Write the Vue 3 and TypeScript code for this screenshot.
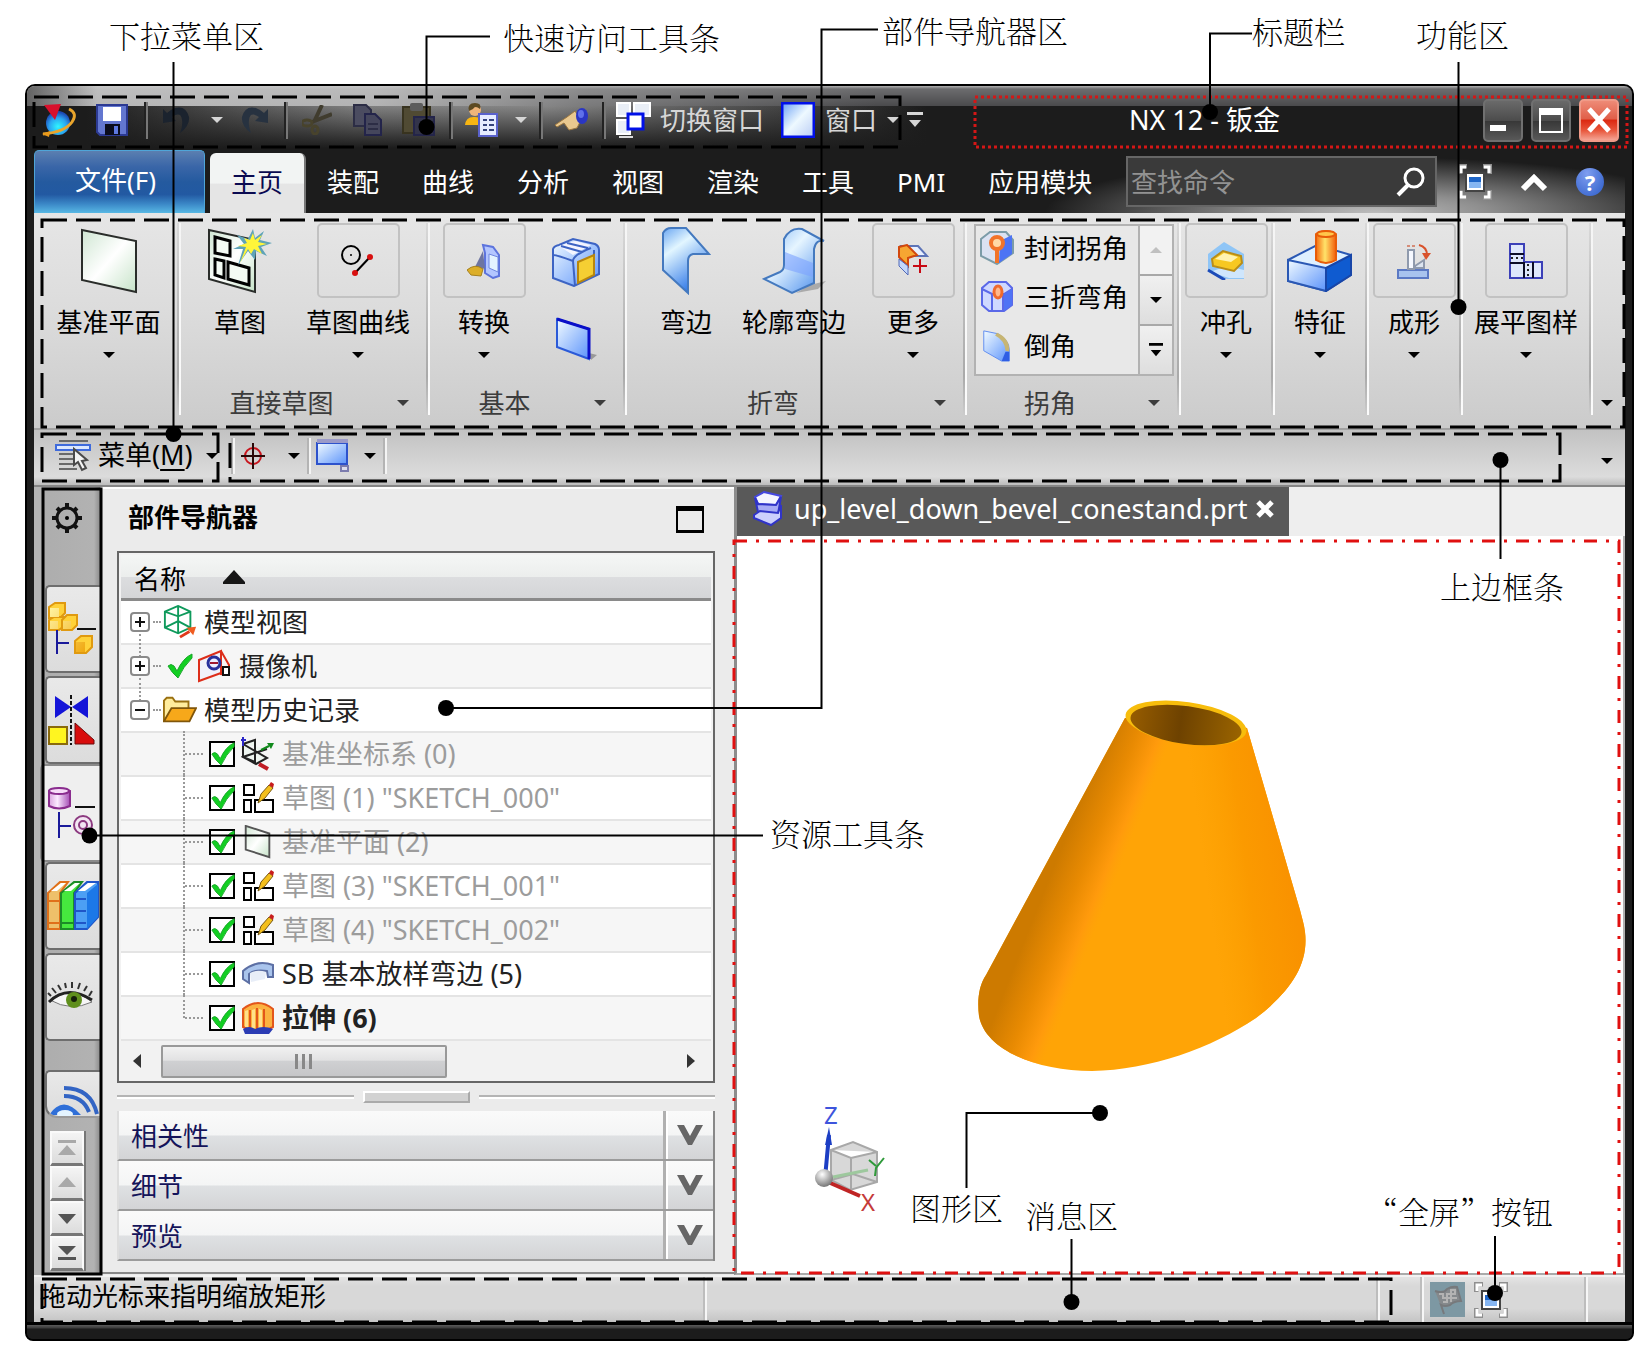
<script setup lang="ts">
import { ref } from 'vue'

interface Label { text: string; x: number; y: number }
interface Leader { points: string; cx?: number; cy?: number }
interface TreeItem {
  text: string
  icon: string
  level: 0 | 1
  open?: boolean
  tick?: boolean
  dim?: boolean
  bold?: boolean
  last?: boolean
}

const labels: Label[] = [
  { text: '下拉菜单区', x: 109, y: 48 },
  { text: '快速访问工具条', x: 503, y: 50 },
  { text: '部件导航器区', x: 882, y: 43 },
  { text: '标题栏', x: 1252, y: 44 },
  { text: '功能区', x: 1416, y: 47 },
  { text: '上边框条', x: 1440, y: 599 },
  { text: '资源工具条', x: 770, y: 846 },
  { text: '图形区', x: 910, y: 1220 },
  { text: '消息区', x: 1025, y: 1228 },
  { text: '“全屏”按钮', x: 1367, y: 1224 },
]

const leaders: Leader[] = [
  { points: '173.5,62 173.5,434', cx: 173.5, cy: 434 },
  { points: '490,36.5 426.5,36.5 426.5,127', cx: 426.5, cy: 127 },
  { points: '878,29.5 821.5,29.5 821.5,708 446,708', cx: 446, cy: 708 },
  { points: '1252,33.5 1210,33.5 1210,112', cx: 1210, cy: 112 },
  { points: '1458.5,62 1458.5,307', cx: 1458.5, cy: 307 },
  { points: '1500.5,559 1500.5,460', cx: 1500.5, cy: 460 },
  { points: '763,835.5 89.5,835.5', cx: 89.5, cy: 835.5 },
  { points: '966.5,1188 966.5,1113 1100,1113', cx: 1100, cy: 1113 },
  { points: '1071.5,1239 1071.5,1302', cx: 1071.5, cy: 1302 },
  { points: '1495,1236 1495,1293', cx: 1495, cy: 1293 },
]

const tabs = ['主页', '装配', '曲线', '分析', '视图', '渲染', '工具', 'PMI', '应用模块']
const activeTab = ref('主页')

const gallery = [
  { text: '封闭拐角', icon: 'corner-closed' },
  { text: '三折弯角', icon: 'corner-three' },
  { text: '倒角', icon: 'chamfer' },
]

const tree: TreeItem[] = [
  { text: '模型视图', icon: 'views', level: 0 },
  { text: '摄像机', icon: 'camera', level: 0, tick: true },
  { text: '模型历史记录', icon: 'folder', level: 0, open: true },
  { text: '基准坐标系 (0)', icon: 'csys', level: 1, dim: true },
  { text: '草图 (1) "SKETCH_000"', icon: 'sketch-s', level: 1, dim: true },
  { text: '基准平面 (2)', icon: 'plane-s', level: 1, dim: true },
  { text: '草图 (3) "SKETCH_001"', icon: 'sketch-s', level: 1, dim: true },
  { text: '草图 (4) "SKETCH_002"', icon: 'sketch-s', level: 1, dim: true },
  { text: 'SB 基本放样弯边 (5)', icon: 'loft', level: 1 },
  { text: '拉伸 (6)', icon: 'extrude', level: 1, bold: true, last: true },
]

const sections = ['相关性', '细节', '预览']
</script>

<template>
  <div class="page">
    <svg class="sprite" aria-hidden="true">
      <defs>
        <linearGradient id="g-plane" x1="0" y1="0" x2="1" y2="1"><stop offset="0" stop-color="#cfe6d2" /><stop offset=".5" stop-color="#fff" /><stop offset="1" stop-color="#c6e3c8" /></linearGradient>
        <linearGradient id="g-blue" x1="0" y1="0" x2="1" y2="1"><stop offset="0" stop-color="#7fb4f5" /><stop offset=".4" stop-color="#e6f5ff" /><stop offset="1" stop-color="#3f86ec" /></linearGradient>
        <linearGradient id="g-flange" x1="0" y1="0" x2=".5" y2="1"><stop offset="0" stop-color="#6aa6f2" /><stop offset=".35" stop-color="#e2f6ff" /><stop offset="1" stop-color="#2f78e8" /></linearGradient>
        <linearGradient id="g-blue2" x1="0" y1="0" x2="1" y2="1"><stop offset="0" stop-color="#f2fbff" /><stop offset="1" stop-color="#5b93fb" /></linearGradient>
        <linearGradient id="g-gold" x1="0" y1="0" x2="1" y2="1"><stop offset="0" stop-color="#fff3a0" /><stop offset="1" stop-color="#f0a810" /></linearGradient>
        <linearGradient id="g-cyl" x1="0" y1="0" x2="1" y2="0"><stop offset="0" stop-color="#f56a10" /><stop offset=".45" stop-color="#ffe36a" /><stop offset="1" stop-color="#f25c08" /></linearGradient>
        <linearGradient id="g-pink" x1="0" y1="0" x2="1" y2="0"><stop offset="0" stop-color="#d9a3df" /><stop offset=".4" stop-color="#fbeaff" /><stop offset="1" stop-color="#a54db5" /></linearGradient>
        <radialGradient id="g-globe" cx=".5" cy=".65" r=".6"><stop offset="0" stop-color="#2ff6ff" /><stop offset=".6" stop-color="#2aa4f0" /><stop offset="1" stop-color="#1c49b4" /></radialGradient>
        <linearGradient id="g-win" x1="0" y1="0" x2="1" y2="1"><stop offset="0" stop-color="#6aa0f5" /><stop offset=".5" stop-color="#eef9ff" /><stop offset="1" stop-color="#b9ccf5" /></linearGradient>
      </defs>

      <symbol id="i-logo" viewBox="0 0 36 34"><circle cx="17" cy="20" r="12" fill="url(#g-globe)" /><path d="M3 2 L20 1 L14 17 Z" fill="#d8102c" /><path d="M28 6 Q37 10 31 19 Q24 29 2 31" fill="none" stroke="#e9a52c" stroke-width="3" /><path d="M1 31 l8 -3 l-1 6 z" fill="#e99a1c" /></symbol>
      <symbol id="i-save" viewBox="0 0 32 32"><path d="M1 1 H31 V31 H4 L1 28 Z" fill="#6377d0" stroke="#2c3a93" stroke-width="2" /><rect x="7" y="3" width="18" height="14" fill="#fff" /><rect x="9" y="20" width="15" height="11" fill="#0a0c1c" /><rect x="18" y="22" width="4" height="8" fill="#5d78e0" /></symbol>
      <symbol id="i-undo" viewBox="0 0 28 28"><path d="M0 3 L0 17 L13 15 L9 11 Q18 5 19 14 Q20 20 17 27 Q27 20 26 11 Q23 -1 12 2 Q7 4 4 7 Z" fill="#1b232e" /></symbol>
      <symbol id="i-redo" viewBox="0 0 28 28"><path d="M28 3 L28 17 L15 15 L19 11 Q10 5 9 14 Q8 20 11 27 Q1 20 2 11 Q5 -1 16 2 Q21 4 24 7 Z" fill="#273240" /></symbol>
      <symbol id="i-cut" viewBox="0 0 30 30"><path d="M20 0 L12 17 M30 9 L10 17" stroke="#403c2e" stroke-width="4" /><ellipse cx="5" cy="18" rx="5" ry="3" fill="none" stroke="#48432c" stroke-width="3" /><ellipse cx="13" cy="25" rx="3" ry="4" fill="none" stroke="#48432c" stroke-width="3" /></symbol>
      <symbol id="i-copy" viewBox="0 0 30 32"><path d="M1 1 H13 L18 6 V22 H1 Z" fill="#4b4c60" stroke="#2c2d45" stroke-width="2" /><path d="M12 10 H22 L28 16 V31 H12 Z" fill="#45465c" stroke="#23244a" stroke-width="2" /><path d="M15 20 H25 M15 25 H25" stroke="#2c2d45" stroke-width="2" /></symbol>
      <symbol id="i-paste" viewBox="0 0 34 34"><rect x="1" y="4" width="27" height="26" fill="#504a33" stroke="#38331f" stroke-width="2" /><rect x="8" y="0" width="13" height="8" rx="2" fill="#5c5c5c" /><rect x="12" y="14" width="20" height="18" fill="#33344a" stroke="#24254a" stroke-width="2" /></symbol>
      <symbol id="i-user" viewBox="0 0 34 34"><circle cx="10" cy="7" r="6" fill="#efb57a" /><path d="M4 8 Q2 0 10 0 Q17 0 15 6 Q10 2 8 6 Z" fill="#5c4a22" /><path d="M0 22 Q1 13 10 14 Q19 14 18 22 Z" fill="#f7b512" /><rect x="14" y="11" width="18" height="22" fill="#e6ecff" stroke="#5a62cc" stroke-width="2" /><path d="M18 17 h4 M24 17 h5 M18 22 h4 M24 22 h5 M18 27 h4 M24 27 h5" stroke="#34427c" stroke-width="2" /></symbol>
      <symbol id="i-hand" viewBox="0 0 34 24"><path d="M0 17 L12 9 L20 3 L26 12 L22 20 L14 22 L9 15 L2 19 Z" fill="#e9c88f" stroke="#9a7640" /><ellipse cx="27" cy="8" rx="6" ry="8" fill="#2a36c4" /><ellipse cx="26" cy="6" rx="3" ry="4" fill="#5f70ea" /></symbol>
      <symbol id="i-switch" viewBox="0 0 36 36"><g fill="#e9eef6" stroke="#fff" stroke-width="2"><rect x="1" y="1" width="13" height="13" /><rect x="18" y="1" width="16" height="13" /><rect x="1" y="18" width="13" height="14" /></g><path d="M3 35 H17" stroke="#ddd" stroke-width="2" /><rect x="12" y="12" width="15" height="15" fill="#fff" stroke="#0010e8" stroke-width="3" /></symbol>
      <symbol id="i-window" viewBox="0 0 34 36"><rect x="1" y="1" width="32" height="34" fill="url(#g-win)" stroke="#0010e8" stroke-width="3" /></symbol>
      <symbol id="i-caret" viewBox="0 0 12 6"><path d="M0 0 H12 L6 6 Z" fill="currentColor" /></symbol>
      <symbol id="i-caret-up" viewBox="0 0 12 6"><path d="M0 6 H12 L6 0 Z" fill="currentColor" /></symbol>
      <symbol id="i-more" viewBox="0 0 16 16"><path d="M0 0 H16 V3 H0 Z M2 8 H14 L8 15 Z" fill="currentColor" /></symbol>
      <symbol id="i-full" viewBox="0 0 34 36"><path d="M2 10 V2 H9 M25 2 H32 V10 M32 26 V34 H25 M9 34 H2 V26" fill="none" stroke="#8f8f8f" stroke-width="5" /><path d="M3 9 V3 H8 M26 3 H31 V9 M31 27 V33 H26 M8 33 H3 V27" fill="none" stroke="#fff" stroke-width="3" /><rect x="8" y="9" width="18" height="18" fill="#fff" stroke="#444" stroke-width="2" /><rect x="11" y="13" width="12" height="6" fill="#1f66c8" /><rect x="11" y="18" width="12" height="6" fill="#86b6f2" /></symbol>
      <symbol id="i-search" viewBox="0 0 30 30"><circle cx="18" cy="11" r="9" fill="none" stroke="#fff" stroke-width="3" /><path d="M12 18 L2 28" stroke="#fff" stroke-width="4" /></symbol>
      <symbol id="i-up" viewBox="0 0 28 20"><path d="M3 17 L14 6 L25 17" fill="none" stroke="#fff" stroke-width="6" /></symbol>

      <symbol id="i-plane" viewBox="0 0 58 66"><path d="M2 2 L56 13 V64 L2 52 Z" fill="url(#g-plane)" stroke="#2a2d2a" stroke-width="2" /></symbol>
      <symbol id="i-sketch" viewBox="0 0 66 66"><path d="M2 2 L48 12 V64 L2 51 Z" fill="url(#g-plane)" stroke="#2a2d2a" stroke-width="2" /><path d="M8 9 L23 13 V28 L8 25 Z M8 31 L17 33 V50 L8 47 Z M21 34 L42 40 V57 L21 51 Z" fill="#f4fbf4" stroke="#000" stroke-width="3" /><path d="M46 1 L48 10 L57 3 L53 12 L65 15 L54 19 L60 28 L49 23 L48 32 L41 23 L31 37 L36 21 L26 21 L37 16 L30 7 L41 11 Z" fill="#5fa3b8" /><path d="M46 5 L48 12 L55 7 L51 14 L60 16 L51 18 L55 26 L47 21 L44 26 L41 21 L33 35 L39 19 L31 18 L40 15 L37 10 L43 12 Z" fill="#fff53a" /></symbol>
      <symbol id="i-curve" viewBox="0 0 34 34"><circle cx="10" cy="11" r="9" fill="none" stroke="#000" stroke-width="2" /><circle cx="10" cy="11" r="1" /><path d="M14 29 L29 13" stroke="#000" stroke-width="2" /><circle cx="14" cy="29" r="3" fill="#d80f0f" /><circle cx="29" cy="13" r="3" fill="#d80f0f" /></symbol>
      <symbol id="i-convert" viewBox="0 0 34 36"><path d="M16 2 L26 4 L32 12 V33 L26 35 L18 30 V10 Z" fill="#b3c6ff" stroke="#5d74dd" stroke-width="2" /><path d="M22 11 L31 14 V29 L22 25 Z" fill="#e3f3ff" stroke="#6f86e0" /><path d="M16 8 L18 26 L8 24 Z" fill="#6d75a2" /><path d="M0 27 Q8 20 16 26 L14 33 L4 32 Z" fill="#dcae28" stroke="#a5801e" /></symbol>
      <symbol id="i-box" viewBox="0 0 50 50"><path d="M2 12 Q3 9 8 8 L22 2 L44 7 Q48 9 48 13 V37 L23 49 L2 41 Z" fill="url(#g-blue2)" stroke="#3d64c4" stroke-width="2" /><path d="M8 9 L24 4 L40 8 L22 18 Z" fill="#f4f5ff" /><path d="M2 18 Q6 18 22 24 L24 49 M22 24 Q22 18 40 11 M10 9 L31 15 M16 6 L37 11 M43 13 V39" fill="none" stroke="#3d64c4" stroke-width="2" /><path d="M27 25 L43 18 V38 L27 46 Z" fill="#f5cf33" stroke="#b8860e" stroke-width="2" /></symbol>
      <symbol id="i-sheet" viewBox="0 0 42 44"><path d="M34 36 L42 38 L36 43 Z" fill="#999" /><path d="M2 2 L34 12 V42 L2 30 Z" fill="url(#g-blue2)" stroke="#2b5ad8" stroke-width="2" /><path d="M2 2 L34 12 V42" fill="none" stroke="#0a0fc8" stroke-width="3" /></symbol>
      <symbol id="i-flange" viewBox="0 0 50 68"><path d="M2 6 Q5 1 10 1 H25 L48 27 H32 Q27 28 27 34 V66 L2 43 Z" fill="url(#g-flange)" stroke="#4479bf" stroke-width="2" /></symbol>
      <symbol id="i-contour" viewBox="0 0 64 68"><path d="M48 58 L64 54 L56 62 L34 66 Z" fill="#aaa" /><path d="M22 12 Q28 0 40 2 L62 14 Q54 12 52 22 V56 L30 66 L2 52 L18 45 Q22 43 22 38 Z" fill="url(#g-blue)" stroke="#4479bf" stroke-width="2" /><path d="M23 25 L51 36 V50 L23 42 Z" fill="#7ba1ff" opacity=".6" /></symbol>
      <symbol id="i-more-bend" viewBox="0 0 32 34"><path d="M5 2 H21 L30 12 H18 Z" fill="#e8f0ff" stroke="#5d74b8" stroke-width="2" /><path d="M2 3 L10 1 L20 11 L11 14 V22 L2 13 Z" fill="#f6a632" stroke="#d2470c" stroke-width="2" /><path d="M2 15 L11 22 V31 L2 22 Z" fill="#c4d8fb" stroke="#5168b8" /><path d="M23 15 V29 M16 22 H30" stroke="#c80a14" stroke-width="2" /></symbol>
      <symbol id="i-corner-closed" viewBox="0 0 34 34"><path d="M1 8 L10 1 H26 L33 9 V22 L17 33 L1 25 Z" fill="#dbe2f2" stroke="#7c9ca8" stroke-width="2" /><path d="M20 10 L32 4 V23 L19 32 Z" fill="#4d74f4" /><circle cx="17" cy="12" r="6" fill="#ffd9a6" stroke="#f2742a" stroke-width="4" /><path d="M17 17 V32" stroke="#f2742a" stroke-width="4" /></symbol>
      <symbol id="i-corner-three" viewBox="0 0 34 34"><path d="M2 8 L9 2 H26 L32 8 V25 L24 31 H9 L2 25 Z" fill="#cfd8ff" stroke="#5a68e8" stroke-width="2" /><path d="M2 9 L12 14 H24 L32 9 M12 14 V31 M23 14 V31" fill="none" stroke="#5a68e8" stroke-width="2" /><path d="M24 14 L32 9 V25 L24 31 Z" fill="#4f73f5" /><ellipse cx="18" cy="12" rx="4" ry="6" fill="#ffb98c" stroke="#ef6a2e" stroke-width="3" /></symbol>
      <symbol id="i-chamfer" viewBox="0 0 34 36"><path d="M3 2 L18 5 Q30 12 30 22 V34 L22 34 L3 23 Z" fill="url(#g-blue2)" stroke="#5c8af0" /><path d="M17 4 Q31 10 30 24 L26 23 Q25 12 15 7 Z" fill="#c7b573" /><path d="M30 24 V34 L22 34 L26 24 Z" fill="#2f5ee4" /></symbol>
      <symbol id="i-punch" viewBox="0 0 38 38"><path d="M1 12 L17 0 L37 12 V37 L20 37 L1 30 Z" fill="#8fc5f6" /><path d="M3 30 L20 24 L37 28 V36 H22 Z" fill="#cfe6fc" /><path d="M1 28 L18 38" stroke="#1c4bb8" stroke-width="3" /><path d="M5 17 L16 9 L34 14 L35 21 L27 29 L6 24 Z" fill="#f7c821" stroke="#b98d18" stroke-width="2" /><path d="M8 17 L17 11 L31 15 L24 20 Z" fill="#fff3b0" /></symbol>
      <symbol id="i-feature" viewBox="0 0 66 62"><path d="M1 30 L30 15 L64 25 V45 L39 61 L1 51 Z" fill="#dff0ff" stroke="#2a58b4" stroke-width="2" /><path d="M1 30 L39 38 V61 L1 51 Z" fill="url(#g-blue2)" stroke="#2a58b4" stroke-width="2" /><path d="M39 38 L64 25 V45 L39 61 Z" fill="#0f5bd0" stroke="#1846a8" stroke-width="2" /><path d="M29 4 Q39 -2 49 4 V30 Q39 36 29 30 Z" fill="url(#g-cyl)" stroke="#e85c08" stroke-width="2" /><ellipse cx="39" cy="4" rx="9" ry="3" fill="#ffc64a" stroke="#e85c08" stroke-width="2" /></symbol>
      <symbol id="i-form" viewBox="0 0 34 36"><rect x="1" y="27" width="30" height="8" fill="#a8c3ee" stroke="#5b79c4" stroke-width="2" /><rect x="11" y="7" width="6" height="19" fill="#f5f8ff" stroke="#8f9aad" stroke-width="2" /><path d="M18 23 L27 17 V25 H18 Z" fill="#dde5f0" stroke="#8f9aad" stroke-width="2" /><path d="M10 3 h3 m2 0 h3" stroke="#d58c78" stroke-width="2" /><path d="M22 2 Q30 4 30 12" fill="none" stroke="#d9532c" stroke-width="2" /><path d="M25 10 H34 L29 17 Z" fill="#d9532c" /></symbol>
      <symbol id="i-flat" viewBox="0 0 34 36"><path d="M1 1 H15 V19 H33 V35 H1 Z" fill="#dfe7fb" stroke="#3c40b8" stroke-width="2" /><path d="M1 11 H15 M1 20 H15 V35 M24 19 V35" fill="none" stroke="#0c0c28" stroke-width="2" /><path d="M2 15 H14 M19 21 V34" stroke="#222" stroke-width="2" stroke-dasharray="2 3" /></symbol>

      <symbol id="i-menu" viewBox="0 0 36 32"><path d="M4 1 H33 M4 14 H20 M4 19 H20 M4 24 H20 M4 29 H22" stroke="#6a6a6a" stroke-width="2" /><rect x="1" y="5" width="34" height="5" fill="#dce8ff" stroke="#3f6bdc" stroke-width="2" /><path d="M19 9 V25 L23 22 L27 30 L31 28 L27 21 L32 20 Z" fill="#f4f4f4" stroke="#4a4a4a" stroke-width="2" /></symbol>
      <symbol id="i-target" viewBox="0 0 26 26"><circle cx="13" cy="13" r="8" fill="none" stroke="#c8141c" stroke-width="2" /><path d="M13 0 V26 M1 13 H25" stroke="#2a0808" stroke-width="2" /></symbol>
      <symbol id="i-view" viewBox="0 0 34 34"><rect x="1" y="4" width="30" height="21" fill="url(#g-blue2)" stroke="#2d52cc" stroke-width="2" /><rect x="1" y="0" width="31" height="4" fill="#9b9ac8" /><rect x="25" y="27" width="7" height="5" fill="#dde" stroke="#7c7cae" stroke-width="2" /></symbol>

      <symbol id="i-gear" viewBox="0 0 32 32"><circle cx="16" cy="16" r="10" fill="none" stroke="#111" stroke-width="3" /><path d="M16 1 V6 M16 26 V31 M1 16 H6 M26 16 H31 M6 6 L9 9 M23 23 L26 26 M26 6 L23 9 M6 26 L9 23" stroke="#111" stroke-width="4" /><circle cx="16" cy="16" r="2" /></symbol>
      <symbol id="i-assembly" viewBox="0 0 50 54">
        <g stroke="#e09a10" fill="#ffd23a" stroke-width="2"><path d="M2 5 L8 1 H18 V11 L13 16 H2 Z" /><path d="M2 18 L7 15 H17 V24 L12 28 H2 Z" /><path d="M15 18 L20 13 H30 V23 L25 28 H15 Z" /><path d="M28 39 L34 34 H45 V45 L39 51 H28 Z" /></g>
        <path d="M3 6 H12 V15 H3 Z M3 19 H11 V27 H3 Z M16 19 H24 V27 H16 Z M29 40 H38 V50 H29 Z" fill="url(#g-gold)" />
        <path d="M30 27 H49" stroke="#111" stroke-width="2" /><path d="M10 28 V52 M10 41 H22" stroke="#1a1a9a" stroke-width="2" />
      </symbol>
      <symbol id="i-constraint" viewBox="0 0 48 50"><path d="M8 1 L24 12 L8 23 Z M41 1 L25 12 L41 23 Z" fill="#1414d8" /><path d="M24 0 V50" stroke="#111" stroke-width="2" stroke-dasharray="4 2" /><rect x="2" y="32" width="18" height="17" fill="#fff520" stroke="#8a6a0c" stroke-width="2" /><path d="M28 28 L47 45 V49 H28 Z" fill="#d80c0c" stroke="#6c0a0a" /></symbol>
      <symbol id="i-part" viewBox="0 0 48 52"><path d="M1 4 Q11 -1 22 4 V19 Q11 24 1 19 Z" fill="url(#g-pink)" stroke="#8a2c8e" stroke-width="2" /><ellipse cx="11" cy="4" rx="10" ry="3" fill="#f6dcf8" stroke="#8a2c8e" stroke-width="2" /><path d="M27 20 H47" stroke="#111" stroke-width="2" /><path d="M11 25 V51 M11 39 H23" stroke="#1a1a9a" stroke-width="2" /><circle cx="35" cy="38" r="9" fill="#f3e6f3" stroke="#8c3a80" stroke-width="2" /><circle cx="35" cy="38" r="4" fill="none" stroke="#8c3a80" stroke-width="2" /></symbol>
      <symbol id="i-books" viewBox="0 0 52 50"><path d="M1 12 L13 1 L21 1 L13 12 V48 H1 Z" fill="#eec06a" stroke="#e0701a" stroke-width="2" /><path d="M14 12 L27 1 H35 L27 12 V48 H14 Z" fill="#46e83e" stroke="#1c8c28" stroke-width="2" /><path d="M28 12 L40 1 H51 V36 L40 48 H28 Z" fill="#4c9ff4" stroke="#1f55c8" stroke-width="2" /><path d="M4 10 L14 2 H19 L10 10 Z M17 10 L28 2 H33 L24 10 Z M31 10 L41 2 H49 L38 10 Z" fill="#fff" /><path d="M40 12 L51 3 V36 L40 48 Z" fill="#1c78e8" /><path d="M1 20 H13 M1 42 H13" stroke="#e0701a" stroke-width="2" /><path d="M28 18 H39 M28 30 H39 M28 42 H39" stroke="#1f55c8" stroke-width="2" /><path d="M14 42 H27" stroke="#1c8c28" stroke-width="2" /></symbol>
      <symbol id="i-eye" viewBox="0 0 48 30"><path d="M3 18 Q22 2 45 20 Q24 30 3 18 Z" fill="#f6f6f6" stroke="#777" /><path d="M2 20 Q20 2 45 18" fill="none" stroke="#222" stroke-width="3" /><path d="M4 14 L1 11 M9 11 L5 6 M14 8 L11 3 M19 6 L18 1 M25 6 L25 0 M31 7 L33 1 M37 9 L40 4 M42 14 L45 9" stroke="#333" stroke-width="2" /><circle cx="27" cy="18" r="8" fill="#5f8f1c" /><circle cx="27" cy="17" r="3" fill="#16200a" /></symbol>
      <symbol id="i-web" viewBox="0 0 52 30"><path d="M2 29 Q16 8 34 29 Z" fill="#2f6fd8" /><ellipse cx="18" cy="28" rx="8" ry="4" fill="#e4f4ff" /><path d="M17 2 Q44 2 50 28 M17 10 Q36 10 42 26" fill="none" stroke="#3264c4" stroke-width="4" /></symbol>

      <symbol id="i-views" viewBox="0 0 36 36"><path d="M2 7 L16 1 L29 7 V24 L16 30 L2 24 Z M2 7 L16 12 L29 7 M16 1 V30 M2 24 L16 17 L29 24" fill="none" stroke="#0f9a5c" stroke-width="2" /><path d="M18 34 L28 28" stroke="#e03a1c" stroke-width="3" /><path d="M25 24 L35 23 L32 32 Z" fill="#f05c20" /></symbol>
      <symbol id="i-tick" viewBox="0 0 28 26"><path d="M2 13 Q5 10 8 13 L11 18 Q17 5 26 1 L26 5 Q17 14 12 25 Q6 20 2 13 Z" fill="#12cf22" stroke="#1aa52a" /></symbol>
      <symbol id="i-camera" viewBox="0 0 34 34"><path d="M1 11 L23 2 V24 L1 32 Z" fill="#f1f1fa" stroke="#dd2e1a" stroke-width="2" /><path d="M23 2 L31 16 V26 L22 25" fill="none" stroke="#dd2e1a" stroke-width="2" /><circle cx="16" cy="14" r="6" fill="#eef" stroke="#28309c" stroke-width="3" /><path d="M12 14 H20" stroke="#a01830" stroke-width="2" /><rect x="25" y="18" width="6" height="8" fill="#fff" stroke="#111" stroke-width="2" /></symbol>
      <symbol id="i-folder" viewBox="0 0 36 28"><path d="M1 26 V4 L4 1 H10 L13 5 H27 V14" fill="#ffec9c" stroke="#9a7010" stroke-width="2" /><path d="M1 26 L9 12 H35 L28 26 Z" fill="#f7a81a" stroke="#80560a" stroke-width="2" /></symbol>
      <symbol id="i-csys" viewBox="0 0 34 34"><path d="M2 7 L14 3 V25 L2 20 Z M2 7 L26 21 L15 27 L2 20 L26 12" fill="#eaf5ec" fill-opacity=".6" stroke="#222" stroke-width="2" /><path d="M2 9 V0 M0 3 H5" stroke="#2c28c8" stroke-width="2" /><path d="M20 13 L28 9" stroke="#118a1c" stroke-width="2" /><path d="M26 6 H33 L30 12 Z" fill="#118a1c" /><path d="M18 27 L27 32" stroke="#c01c24" stroke-width="4" /></symbol>
      <symbol id="i-sketch-s" viewBox="0 0 34 34"><path d="M3 4 H13 V14 H3 Z M3 19 H10 V31 H3 Z M14 19 H32 V31 H14 Z" fill="#fff" stroke="#000" stroke-width="2" /><path d="M17 22 L20 13 L28 4 L32 7 L24 17 Z" fill="#f4bf1c" stroke="#7a5a14" /><path d="M28 4 L32 7 L33 3 L30 1 Z" fill="#c81c1c" /></symbol>
      <symbol id="i-plane-s" viewBox="0 0 34 36"><path d="M4 1 L29 9 V34 L4 26 Z" fill="url(#g-plane)" stroke="#555" stroke-width="2" /></symbol>
      <symbol id="i-loft" viewBox="0 0 34 34"><path d="M2 14 Q16 2 32 8 V20 H27 L26 14 Q14 12 8 17 V26 L2 22 Z" fill="#a9c4ec" stroke="#5c6fa4" stroke-width="2" /><path d="M9 16 Q16 12 25 15 L24 22 L10 25 Z" fill="#e8eef8" /></symbol>
      <symbol id="i-extrude" viewBox="0 0 34 34"><path d="M2 8 Q17 -4 32 8 V26 Q17 34 2 26 Z" fill="#fbb240" stroke="#e3561a" stroke-width="2" /><path d="M9 9 V29 M16 7 V30 M23 8 V29" stroke="#e3561a" stroke-width="2" /><path d="M11 9 V27 H14 V8 Z M4 10 V26 H7 V9 Z M18 8 V28 H21 V9 Z" fill="#ffe08a" /><path d="M2 28 Q8 24 14 28 Q22 24 32 28 L28 33 H4 Z" fill="#2b3cb4" /></symbol>
      <symbol id="i-doc" viewBox="0 0 32 36"><path d="M3 6 L12 1 L29 5 L24 14 L6 13 Z" fill="#f5f6ff" stroke="#4548e0" stroke-width="2" /><path d="M3 7 L6 21 L26 23 L29 6 L24 14 L6 13 Z" fill="#a6aaf5" stroke="#3034c8" stroke-width="2" /><path d="M2 24 L8 20 L26 22 L29 14 V27 L19 34 L2 27 Z" fill="#ccd0fc" stroke="#3034c8" stroke-width="2" /></symbol>
      <symbol id="i-vee" viewBox="0 0 28 22"><path d="M1 1 H8 L14 12 L20 1 H27 L16 21 H12 Z" fill="#666" /></symbol>
    </svg>

    <main class="window">
      <header class="titlebar">
        <nav class="quick">
          <button class="q w50" aria-label="NX"><svg width="36" height="34"><use href="#i-logo" /></svg></button>
          <button class="q w56" aria-label="保存"><svg width="32" height="32"><use href="#i-save" /></svg></button>
          <i class="qsep w11"></i>
          <button class="q w52" aria-label="撤销"><svg width="28" height="28"><use href="#i-undo" /></svg></button>
          <button class="q w28" aria-label="撤销列表"><svg width="12" height="6"><use href="#i-caret" /></svg></button>
          <button class="q w46" aria-label="重做"><svg width="28" height="28"><use href="#i-redo" /></svg></button>
          <i class="qsep w17"></i>
          <button class="q w46" aria-label="剪切"><svg width="30" height="30"><use href="#i-cut" /></svg></button>
          <button class="q w56" aria-label="复制"><svg width="30" height="32"><use href="#i-copy" /></svg></button>
          <button class="q w46" aria-label="粘贴"><svg width="34" height="34"><use href="#i-paste" /></svg></button>
          <i class="qsep w17"></i>
          <button class="q w46" aria-label="角色"><svg width="34" height="34"><use href="#i-user" /></svg></button>
          <button class="q w32" aria-label="角色列表"><svg width="12" height="6"><use href="#i-caret" /></svg></button>
          <i class="qsep w7"></i>
          <button class="q w56" aria-label="触控"><svg width="34" height="24"><use href="#i-hand" /></svg></button>
          <i class="qsep w7"></i>
          <button class="q switch"><svg width="36" height="36"><use href="#i-switch" /></svg>切换窗口</button>
          <button class="q wins"><svg width="34" height="36"><use href="#i-window" /></svg>窗口<svg width="12" height="6"><use href="#i-caret" /></svg></button>
          <button class="q w32" aria-label="工具条选项"><svg width="16" height="16"><use href="#i-more" /></svg></button>
        </nav>
        <h1 class="apptitle">NX 12 - 钣金</h1>
        <div class="winbtns">
          <button class="wb" aria-label="最小化"><svg width="28" height="30" viewBox="0 0 28 30"><rect x="1" y="20" width="16" height="6" fill="#fff" /></svg></button>
          <button class="wb" aria-label="最大化"><svg width="28" height="30" viewBox="0 0 28 30"><path d="M2 3 H26 V28 H2 Z M4 10 V26 H24 V10 Z" fill="#fff" fill-rule="evenodd" /></svg></button>
          <button class="wb close" aria-label="关闭"><svg width="28" height="30" viewBox="0 0 28 30"><path d="M4 4 L24 26 M24 4 L4 26" stroke="#fff" stroke-width="5" /></svg></button>
        </div>
      </header>

      <nav class="tabs">
        <button class="file">文件(F)</button>
        <button v-for="t in tabs" :key="t" class="tab" :class="{ on: t === activeTab }" @click="activeTab = t">{{ t }}</button>
        <div class="tabs-right">
          <label class="search">
            <input type="text" placeholder="查找命令" aria-label="查找命令" />
            <svg width="30" height="30"><use href="#i-search" /></svg>
          </label>
          <button class="tr" aria-label="全屏"><svg width="34" height="36"><use href="#i-full" /></svg></button>
          <button class="tr" aria-label="最小化功能区"><svg width="28" height="20"><use href="#i-up" /></svg></button>
          <button class="tr" aria-label="帮助"><span class="help">?</span></button>
        </div>
      </nav>

      <section class="ribbon">
        <div class="group g1">
          <div class="tools">
            <button class="tool"><span class="slot"><svg width="58" height="66"><use href="#i-plane" /></svg></span><span>基准平面</span><svg class="dd" width="12" height="6"><use href="#i-caret" /></svg></button>
          </div>
        </div>
        <div class="group g2">
          <div class="tools">
            <button class="tool t120"><span class="slot"><svg width="66" height="66"><use href="#i-sketch" /></svg></span><span>草图</span></button>
            <button class="tool t120"><span class="slot framed"><svg width="34" height="34"><use href="#i-curve" /></svg></span><span>草图曲线</span><svg class="dd" width="12" height="6"><use href="#i-caret" /></svg></button>
          </div>
          <div class="foot"><span>直接草图</span><svg width="12" height="6"><use href="#i-caret" /></svg></div>
        </div>
        <div class="group g3">
          <div class="tools">
            <button class="tool t108"><span class="slot framed"><svg width="34" height="36"><use href="#i-convert" /></svg></span><span>转换</span><svg class="dd" width="12" height="6"><use href="#i-caret" /></svg></button>
            <div class="stack">
              <button aria-label="实体特征"><svg width="50" height="50"><use href="#i-box" /></svg></button>
              <button aria-label="突出块"><svg width="42" height="44"><use href="#i-sheet" /></svg></button>
            </div>
          </div>
          <div class="foot"><span>基本</span><svg width="12" height="6"><use href="#i-caret" /></svg></div>
        </div>
        <div class="group g4">
          <div class="tools">
            <button class="tool t108"><span class="slot"><svg width="50" height="68"><use href="#i-flange" /></svg></span><span>弯边</span></button>
            <button class="tool t108"><span class="slot"><svg width="64" height="68"><use href="#i-contour" /></svg></span><span>轮廓弯边</span></button>
            <button class="tool t108 end"><span class="slot framed"><svg width="32" height="34"><use href="#i-more-bend" /></svg></span><span>更多</span><svg class="dd" width="12" height="6"><use href="#i-caret" /></svg></button>
          </div>
          <div class="foot"><span>折弯</span><svg width="12" height="6"><use href="#i-caret" /></svg></div>
        </div>
        <div class="group g5">
          <div class="gallery">
            <div class="glist">
              <button v-for="g in gallery" :key="g.text"><svg width="34" height="34"><use :href="'#i-' + g.icon" /></svg>{{ g.text }}</button>
            </div>
            <div class="gscroll">
              <button class="off" aria-label="上一行"><svg width="12" height="6"><use href="#i-caret-up" /></svg></button>
              <button aria-label="下一行"><svg width="12" height="6"><use href="#i-caret" /></svg></button>
              <button aria-label="展开"><svg width="14" height="14"><use href="#i-more" /></svg></button>
            </div>
          </div>
          <div class="foot"><span>拐角</span><svg width="12" height="6"><use href="#i-caret" /></svg></div>
        </div>
        <div class="group g6"><div class="tools"><button class="tool"><span class="slot framed"><svg width="38" height="38"><use href="#i-punch" /></svg></span><span>冲孔</span><svg class="dd" width="12" height="6"><use href="#i-caret" /></svg></button></div></div>
        <div class="group g6"><div class="tools"><button class="tool"><span class="slot"><svg width="66" height="62"><use href="#i-feature" /></svg></span><span>特征</span><svg class="dd" width="12" height="6"><use href="#i-caret" /></svg></button></div></div>
        <div class="group g6"><div class="tools"><button class="tool"><span class="slot framed"><svg width="34" height="36"><use href="#i-form" /></svg></span><span>成形</span><svg class="dd" width="12" height="6"><use href="#i-caret" /></svg></button></div></div>
        <div class="group g9"><div class="tools"><button class="tool"><span class="slot framed"><svg width="34" height="36"><use href="#i-flat" /></svg></span><span>展平图样</span><svg class="dd" width="12" height="6"><use href="#i-caret" /></svg></button></div></div>
        <button class="ribbon-end" aria-label="功能区选项"><svg width="12" height="6"><use href="#i-caret" /></svg></button>
      </section>

      <section class="borderbar">
        <button class="menu"><svg width="36" height="32"><use href="#i-menu" /></svg><span>菜单(<u>M</u>)</span><svg width="12" height="6"><use href="#i-caret" /></svg></button>
        <i class="bsep"></i>
        <button class="bb" aria-label="选择过滤"><svg width="26" height="26"><use href="#i-target" /></svg><svg width="12" height="6"><use href="#i-caret" /></svg></button>
        <i class="bsep"></i>
        <button class="bb" aria-label="视图"><svg width="34" height="34"><use href="#i-view" /></svg><svg width="12" height="6"><use href="#i-caret" /></svg></button>
        <i class="bsep"></i>
        <button class="bend" aria-label="上边框条选项"><svg width="12" height="6"><use href="#i-caret" /></svg></button>
      </section>

      <section class="work">
        <aside class="resbar">
          <button class="gear" aria-label="资源条选项"><svg width="32" height="32"><use href="#i-gear" /></svg></button>
          <button class="res" aria-label="装配导航器"><svg width="50" height="54"><use href="#i-assembly" /></svg></button>
          <button class="res" aria-label="约束导航器"><svg width="48" height="50"><use href="#i-constraint" /></svg></button>
          <button class="res sel" aria-label="部件导航器"><svg width="48" height="52"><use href="#i-part" /></svg></button>
          <button class="res" aria-label="重用库"><svg width="52" height="50"><use href="#i-books" /></svg></button>
          <button class="res" aria-label="视图管理器"><svg width="48" height="30"><use href="#i-eye" /></svg></button>
          <button class="res cut" aria-label="浏览器"><svg width="52" height="30"><use href="#i-web" /></svg></button>
          <div class="rscroll">
            <button aria-label="顶部"><svg width="20" height="20" viewBox="0 0 20 20"><path d="M1 2 H19 V5 H1 Z M10 7 L19 17 H1 Z" fill="#a9a9a9" /></svg></button>
            <button aria-label="向上"><svg width="20" height="20" viewBox="0 0 20 20"><path d="M10 4 L19 14 H1 Z" fill="#a9a9a9" /></svg></button>
            <button aria-label="向下"><svg width="20" height="20" viewBox="0 0 20 20"><path d="M10 16 L19 6 H1 Z" fill="#555" /></svg></button>
            <button aria-label="底部"><svg width="20" height="20" viewBox="0 0 20 20"><path d="M10 12 L19 3 H1 Z M1 14 H19 V17 H1 Z" fill="#555" /></svg></button>
          </div>
        </aside>

        <section class="navigator">
          <div class="navhead">
            <h2>部件导航器</h2>
            <button aria-label="最大化面板"><svg width="28" height="27" viewBox="0 0 28 27"><path d="M0 0 H28 V27 H0 Z M2 5 V24 H26 V5 Z" fill="#000" fill-rule="evenodd" /></svg></button>
          </div>
          <div class="treebox">
            <button class="colhead"><span>名称</span><svg width="22" height="14" viewBox="0 0 22 14"><path d="M11 0 L22 12 V14 H0 V12 Z" fill="#161616" /></svg></button>
            <ul class="tree">
              <li v-for="(n, i) in tree" :key="i" :class="['lv' + n.level, { dim: n.dim, bold: n.bold, last: n.last, open: n.open }]">
                <template v-if="n.level === 0">
                  <button class="exp" :aria-label="n.open ? '折叠' : '展开'"><svg width="20" height="20" viewBox="0 0 20 20"><path :d="n.open ? 'M5 10 H15' : 'M5 10 H15 M10 5 V15'" stroke="#111" stroke-width="2" /></svg></button>
                  <i class="dots"></i>
                  <svg v-if="n.tick" class="mark" width="28" height="26"><use href="#i-tick" /></svg>
                </template>
                <label v-else class="check"><input type="checkbox" checked :aria-label="n.text" /><svg width="26" height="26"><use href="#i-tick" /></svg></label>
                <svg class="nicon" width="34" height="34"><use :href="'#i-' + n.icon" /></svg>
                <span>{{ n.text }}</span>
              </li>
            </ul>
            <div class="hscroll">
              <button class="arr" aria-label="向左滚动"><svg width="8" height="14" viewBox="0 0 8 14"><path d="M8 0 V14 L0 7 Z" fill="#333" /></svg></button>
              <div class="track"><div class="thumb"><i></i><i></i><i></i></div></div>
              <button class="arr" aria-label="向右滚动"><svg width="8" height="14" viewBox="0 0 8 14"><path d="M0 0 V14 L8 7 Z" fill="#333" /></svg></button>
            </div>
          </div>
          <div class="splitter"><i class="line"></i><i class="grip"></i><i class="line"></i></div>
          <div class="panels">
            <button v-for="s in sections" :key="s"><span>{{ s }}</span><b><svg width="28" height="22"><use href="#i-vee" /></svg></b></button>
          </div>
        </section>

        <section class="graphics">
          <div class="doctabs">
            <div class="doc"><svg width="32" height="36"><use href="#i-doc" /></svg><span>up_level_down_bevel_conestand.prt</span><button aria-label="关闭文件"><svg width="18" height="18" viewBox="0 0 18 18"><path d="M2 2 L16 16 M16 2 L2 16" stroke="#fff" stroke-width="5" /></svg></button></div>
          </div>
          <div class="canvas">
            <svg width="888" height="738" viewBox="737 536 888 738">
              <defs>
                <linearGradient id="shade-l" gradientUnits="userSpaceOnUse" x1="1054" y1="866" x2="1112" y2="889"><stop offset="0" stop-color="#cd7a00" /><stop offset=".45" stop-color="#e88a02" /><stop offset=".8" stop-color="#ff9a0c" /><stop offset="1" stop-color="#ff9f0c" stop-opacity="0" /></linearGradient>
                <linearGradient id="shade-r" gradientUnits="userSpaceOnUse" x1="1205" y1="880" x2="1290" y2="868"><stop offset="0" stop-color="#fba000" stop-opacity="0" /><stop offset=".5" stop-color="#fb9a00" /><stop offset="1" stop-color="#f99200" /></linearGradient>
                <linearGradient id="hole" x1="0" y1="0" x2="1" y2="0"><stop offset="0" stop-color="#965c00" /><stop offset=".45" stop-color="#6e4200" /><stop offset="1" stop-color="#9a6400" /></linearGradient>
                <radialGradient id="ball" cx=".4" cy=".3" r=".7"><stop offset="0" stop-color="#fff" /><stop offset="1" stop-color="#777" /></radialGradient>
              </defs>
              <path v-for="f in ['#ffa406', 'url(#shade-l)', 'url(#shade-r)']" :key="f" d="M1125 718 L986 975 C979 985 977 1000 979 1016 C985 1050 1037 1071 1092 1071 C1150 1070 1212 1048 1256 1018 C1290 992 1309 965 1305 932 C1304 924 1302 918 1300 910 L1247 728 L1186 716 Z" :fill="f" />
              <ellipse cx="1186" cy="723" rx="61" ry="21" transform="rotate(8 1186 723)" fill="#f7bd0c" />
              <ellipse cx="1186" cy="725" rx="56" ry="19" transform="rotate(8 1186 725)" fill="url(#hole)" />
              <path d="M831 1150 L853 1142 L877 1152 V1182 L850 1190 L831 1180 Z M831 1150 L851 1158 L877 1152 M851 1158 V1190 M831 1180 L853 1174 L877 1182" fill="#d8d8d8" fill-rule="nonzero" stroke="#a8a8a8" stroke-width="2" />
              <path d="M833 1177 L868 1170" stroke="#9dc89d" stroke-width="3" />
              <path d="M825 1178 L829 1135" stroke="#1c3ec4" stroke-width="4" />
              <path d="M825 1145 L829 1127 L832 1145 Z" fill="#1c3ec4" />
              <path d="M828 1182 L860 1196" stroke="#c02424" stroke-width="4" />
              <circle cx="824" cy="1178" r="9" fill="url(#ball)" />
              <text x="824" y="1124" class="axis" fill="#3e54dc">Z</text>
              <text x="861" y="1211" class="axis" fill="#c43a3a">X</text>
              <path d="M869 1160 L876 1166 M884 1158 L876 1168 L875 1176" fill="none" stroke="#2f9a3a" stroke-width="2" />
            </svg>
          </div>
        </section>
      </section>

      <footer class="status">
        <p>拖动光标来指明缩放矩形</p>
        <div class="msg"></div>
        <div class="pad"></div>
        <div class="sicons">
          <button class="flag" aria-label="完成草图"><svg width="34" height="34" viewBox="0 0 34 34"><path d="M5 8 Q14 11 17 6 Q22 3 27 4 L31 18 Q24 18 20 22 Q15 24 11 22 L14 31" fill="#85898c" stroke="#77797c" stroke-width="2" /><path d="M9 11 h4 v4 h4 v-4 h4 v-4 h4 v4 h-4 v4 h6 M13 19 h4 v-4 h4 v4" fill="none" stroke="#b3b3b3" stroke-width="2" /></svg></button>
          <button aria-label="全屏"><svg width="34" height="36"><use href="#i-full" /></svg></button>
        </div>
        <div class="rest"></div>
      </footer>
      <div class="sill"></div>
    </main>

    <svg class="notes" width="1645" height="1347" viewBox="0 0 1645 1347">
      <g fill="none" stroke="#000" stroke-width="3" stroke-dasharray="25 9">
        <rect x="34" y="97" width="866" height="50" />
        <rect x="42" y="220" width="1582" height="207" />
        <rect x="42" y="434" width="176" height="47" />
        <rect x="230" y="434" width="1330" height="47" />
        <rect x="42" y="1279" width="1349" height="43" />
      </g>
      <rect x="43" y="489" width="58" height="785" fill="none" stroke="#000" stroke-width="3" />
      <rect x="975" y="97" width="652" height="50" fill="none" stroke="#d41616" stroke-width="3" stroke-dasharray="3 3" />
      <rect x="734" y="541" width="885" height="732" fill="none" stroke="#e01010" stroke-width="3" stroke-dasharray="13 9 3 9" />
      <g v-for="l in leaders" :key="l.points">
        <polyline :points="l.points" fill="none" stroke="#000" stroke-width="2" />
        <circle :cx="l.cx" :cy="l.cy" r="8" />
      </g>
      <text v-for="l in labels" :key="l.text" :x="l.x" :y="l.y" class="note">{{ l.text }}</text>
    </svg>
  </div>
</template>

<style>
body { margin: 0; background: #fff; }
</style>

<style scoped>
* { box-sizing: border-box; }
.page { position: relative; padding: 84px 11px 6px 25px; font: 26px/32px "Noto Sans", "Noto Sans CJK SC", sans-serif; color: #000; background: #fff; overflow: hidden; }
.sprite { position: absolute; width: 0; height: 0; }
svg { display: block; flex: none; }
button { font: inherit; color: inherit; border: 0; background: none; padding: 0; margin: 0; white-space: nowrap; }
h1, h2, p, ul { margin: 0; padding: 0; font: inherit; }
i { font-style: normal; }
.notes { position: absolute; left: 0; top: 0; pointer-events: none; }
.note { font: 200 31px "Noto Serif CJK SC", "Noto Sans CJK SC", serif; }

.window { border: 2px solid #000; border-radius: 10px 10px 8px 8px; background: #1c1c1c; padding: 0 7px; overflow: hidden; }
.titlebar { display: flex; align-items: center; height: 64px; margin: 0 -7px; padding: 4px 7px 0; color: #fff;
  background:
    linear-gradient(90deg, rgba(60,60,60,.7) 0, rgba(200,200,200,0) 70px) 0 0 / 100% 20px no-repeat,
    linear-gradient(90deg, rgba(205,205,205,.85) 0, rgba(205,205,205,.8) 350px, rgba(170,170,170,.5) 560px, rgba(90,90,90,0) 850px) 0 0 / 100% 20px no-repeat,
    linear-gradient(#b0b0b0 0, #6c6c6e 3px, #4a4a4c 20px) 0 0 / 100% 20px no-repeat,
    linear-gradient(rgba(28,28,28,0) 20px, #1c1c1c 62px),
    linear-gradient(90deg, #1c1c1c 60px, #808080 330px, #868686 520px, #1c1c1c 900px); }
.quick { display: flex; align-items: center; color: #d6d6d6; }
.q { display: flex; align-items: center; justify-content: center; height: 40px; }
.qsep { display: flex; justify-content: center; }
.qsep::before { content: ""; width: 4px; height: 37px; background: linear-gradient(90deg, #222 50%, #777 50%); }
.w7 { width: 7px; } .w11 { width: 11px; } .w17 { width: 17px; } .w28 { width: 28px; } .w32 { width: 32px; }
.w46 { width: 46px; } .w50 { width: 50px; } .w52 { width: 52px; } .w56 { width: 56px; }
.switch { gap: 8px; padding-left: 9px; }
.wins { gap: 10px; padding-left: 17px; }
.apptitle { margin-left: auto; width: 354px; white-space: nowrap; font-size: 27px; }
.winbtns { display: flex; gap: 8px; padding-right: 6px; }
.wb { width: 40px; height: 43px; display: flex; align-items: center; justify-content: center; border: 2px solid #707070; border-radius: 5px; background: linear-gradient(#6a6a6a, #4c4c4c 50%, #383838 52%, #585858); }
.wb.close { border-color: #f09a88; background: linear-gradient(#ee8a76, #e0604a 45%, #dc2a12 50%, #e8553a 75%, #f4a494); }

.tabs { display: flex; height: 63px; color: #fff; background: radial-gradient(ellipse 330px 56px at calc(100% - 250px) 100%, #bdbdbd 0, #8d8d8d 35%, rgba(28,28,28,0) 100%), #1c1c1c; }
.file { width: 171px; border-radius: 5px 5px 0 0; margin-right: 5px; padding: 0 8px 4px 0; border: 1px solid #4fa5d8; border-bottom: 0; background: linear-gradient(#5b7fb0, #3a66a8 25%, #245a9f 50%, #2259a2 70%, #3a86c6 85%, #58b8e4); }
.tab { padding: 0 21px; margin-right: 1px; }
.tab.on { margin: 3px 0 0; border-radius: 6px 6px 0 0; background: linear-gradient(#f2f4f3 50%, #e5e5e5 52%); color: #0a0a50; border-right: 2px solid #777; padding-bottom: 3px; }
.tabs-right { display: flex; align-items: center; margin-left: auto; }
.search { display: flex; align-items: center; width: 311px; height: 51px; padding: 0 9px 0 3px; border: 2px solid #666; background: #3a3a3a; margin-right: 7px; }
.search input { flex: 1; min-width: 0; font: inherit; color: #ddd; background: none; border: 0; padding: 0; outline: 0; }
.search input::placeholder { color: #929292; opacity: 1; }
.tr { display: flex; align-items: center; justify-content: center; width: 56px; }
.tr:last-child { margin-right: 7px; }
.tr:nth-child(2) { width: 62px; }
.help { width: 28px; height: 28px; border-radius: 50%; background: radial-gradient(at 40% 20%, #7f9ef0, #2c5cc8); font: 700 22px/28px "Noto Sans", sans-serif; color: #fff; }

.ribbon { display: flex; height: 217px; background: linear-gradient(#e6e6e6, #dcdcdc 45%, #cbcbcb); border-bottom: 2px solid #a2a2a2; }
.group { position: relative; display: flex; flex-direction: column; flex: none; padding-top: 10px; }
.group::after { content: ""; position: absolute; right: 0; top: 10px; width: 4px; height: 192px; background: linear-gradient(rgba(170,170,170,.2), #aaa 80%, #ccc) 0 0 / 2px 100% no-repeat, linear-gradient(#f5f5f5, #fbfbfb) 2px 0 / 2px 100% no-repeat; }
.g1 { width: 147px; padding-left: 2px; } .g2 { width: 249px; } .g3 { width: 197px; } .g4 { width: 340px; } .g5 { width: 214px; } .g6 { width: 94px; } .g9 { width: 130px; }
.tools { display: flex; height: 164px; }
.tool { display: flex; flex-direction: column; align-items: center; width: 100%; }
.t120 { width: 118px; } .t108 { width: 108px; }
.g4 .tools { padding-left: 5px; }
.g6 .tools, .g9 .tools { padding-right: 4px; }
.end { margin-left: auto; }
.slot { display: flex; align-items: center; justify-content: center; width: 83px; height: 75px; margin-bottom: 8px; }
.framed { border: 2px solid #c2c2c2; border-radius: 5px; }
.dd { margin-top: 14px; }
.stack { display: flex; flex-direction: column; align-items: center; width: 76px; padding-top: 14px; gap: 30px; }
.foot { display: flex; align-items: center; color: #3c3c3c; padding-left: 5px; }
.foot span { flex: 1; text-align: center; }
.foot svg { margin: 0 21px 0 20px; }
.gallery { display: flex; width: 200px; height: 152px; margin: 1px 0 11px 7px; border: 2px solid #b2b2b2; background: #e8e8e8; }
.glist { flex: 1; display: flex; flex-direction: column; padding-bottom: 2px; }
.glist button { height: 50px; display: flex; align-items: center; gap: 10px; padding: 0 0 4px 4px; }
.gscroll { width: 34px; display: flex; flex-direction: column; border-left: 2px solid #b2b2b2; }
.gscroll button { flex: 1; display: flex; align-items: center; justify-content: center; background: linear-gradient(#f0f0f0, #dedede); }
.gscroll button + button { border-top: 2px solid #a8a8a8; }
.gscroll .off { background: #f2f2f2; color: #c0c0c0; }
.ribbon-end { flex: 1; display: flex; justify-content: center; padding: 187px 4px 0 0; }

.borderbar { display: flex; align-items: center; height: 57px; padding-bottom: 4px; background: linear-gradient(#c2c2c2, #dcdcdc 85%, #bcbcbc); border-bottom: 2px solid #868686; }
.menu { display: flex; align-items: center; width: 197px; padding: 0 13px 0 21px; gap: 7px; font-size: 27px; }
.menu span { flex: 1; text-align: left; padding-bottom: 2px; }
.menu u { text-underline-offset: 4px; text-decoration-thickness: 2px; }
.bsep { width: 4px; height: 36px; background: linear-gradient(90deg, #b4b4b4 50%, #f4f4f4 50%); }
.bb { display: flex; align-items: center; justify-content: space-between; width: 72px; padding: 0 7px 0 5px; }
.bend { margin-left: auto; padding: 10px 12px 0 0; }

.work { display: flex; height: 788px; background: #ebebeb; }
.resbar { width: 68px; flex: none; padding-left: 11px; background: linear-gradient(90deg, #b4b4b4, #b4b4b4 8px, #adadad 8px, #b2b2b2 60px, #8c8c8c 66px, #fff 67px); display: flex; flex-direction: column; }
.gear { height: 98px; display: flex; align-items: flex-start; padding: 15px 0 0 6px; }
.res { display: flex; align-items: center; width: 55px; height: 88px; margin-bottom: 3px; border: 2px solid #6e6e6e; border-right: 0; border-radius: 5px 0 0 5px; background: linear-gradient(#e9e9e9, #dcdcdc); padding: 0; overflow: hidden; }
.res.sel { height: 98px; margin: -3px 0 0 -5px; width: 60px; padding-left: 6px; background: #efefef; border-color: #8a8a8a; }
.cut { height: 48px; margin-top: 26px; align-items: flex-end; border-bottom-color: #9a9a9a; border-radius: 5px 0 0 12px; }
.rscroll { display: flex; flex-direction: column; width: 36px; margin: 10px 0 0 5px; border-right: 2px solid #777; }
.rscroll button { display: flex; align-items: center; justify-content: center; height: 35px; border: 2px solid #fafafa; border-bottom: 3px solid #777; background: linear-gradient(#f4f4f4, #dcdcdc); }

.navigator { width: 632px; flex: none; padding: 0 19px 0 15px; border-top: 2px solid #fff; border-bottom: 2px solid #888; margin-bottom: 1px; display: flex; flex-direction: column; }
.navhead { display: flex; justify-content: space-between; align-items: center; height: 62px; padding: 0 11px 2px 11px; }
.navhead h2 { font-weight: 700; padding-bottom: 4px; }
.treebox { height: 532px; border: 2px solid #666; padding: 2px; display: flex; flex-direction: column; background: #f2f2f2; }
.colhead { display: flex; align-items: center; gap: 37px; height: 46px; flex: none; padding-left: 13px; border-bottom: 3px solid #8a8a8a; background: linear-gradient(#f4f6f5, #eceeed 50%, #dcdddf 52%, #d4d5d7); }
.colhead span { padding-top: 4px; }
.tree { list-style: none; }
.tree li { position: relative; display: flex; align-items: center; height: 44px; padding-left: 9px; background: #fff; border-bottom: 2px solid #e4e4e4; color: #222; white-space: nowrap; }
.tree li:nth-child(even) { background: #f6f6f6; }
.tree .dim { color: #9c9c9c; }
.tree .bold { font-weight: 700; }
.tree .lv1 { padding-left: 88px; font-size: 27px; }
.exp { width: 20px; height: 20px; border: 2px solid #8a8a8a; border-radius: 4px; background: #fff; display: flex; align-items: center; justify-content: center; position: relative; z-index: 1; }
.dots { width: 8px; margin: 0 2px 0 3px; border-top: 2px dotted #999; }
.lv0:not(.open)::before { content: ""; position: absolute; left: 18px; top: 33px; height: 23px; border-left: 2px dotted #999; z-index: 1; }
.lv1::before { content: ""; position: absolute; left: 62px; top: -2px; height: 44px; border-left: 2px dotted #999; }
.lv1.last::before { height: 23px; }
.lv1::after { content: ""; position: absolute; left: 64px; top: 20px; width: 18px; border-top: 2px dotted #999; }
.nicon { margin-right: 7px; }
.mark { margin: 0 4px 0 3px; }
.check { position: relative; width: 26px; height: 26px; margin-right: 6px; }
.check input { appearance: none; display: block; width: 26px; height: 26px; margin: 0; border: 2px solid #000; background: #fff; }
.check svg { position: absolute; left: 1px; top: 0; }
.hscroll { display: flex; align-items: center; height: 34px; margin-top: 3px; }
.arr { width: 40px; display: flex; justify-content: center; padding-right: 8px; }
.arr:last-child { padding: 0; }
.track { flex: 1; }
.thumb { width: 56%; height: 33px; border: 2px solid #999; border-radius: 2px; background: linear-gradient(#f1f1f1, #e2e2e3 45%, #cfd0d2 50%, #c6c6c8); display: flex; align-items: center; justify-content: center; gap: 4px; }
.thumb i { width: 3px; height: 15px; background: #888; }
.splitter { display: flex; align-items: center; gap: 9px; height: 28px; }
.line { flex: 1; height: 4px; background: linear-gradient(#b4b4b4 50%, #fff 50%); }
.grip { width: 107px; height: 12px; background: #d2d2d2; border: 2px solid #fff; border-right-color: #aaa; border-bottom-color: #aaa; }
.panels { display: flex; flex-direction: column; border-right: 2px solid #888; }
.panels button { display: flex; align-items: stretch; height: 50px; color: #14145a; border-bottom: 2px solid #9b9b9b; border-left: 2px solid #ddd; background: linear-gradient(#fafafa, #f4f5f5 50%, #dfe1e3 52%, #d3d4d6); }
.panels span { flex: 1; text-align: left; padding-left: 12px; line-height: 50px; }
.panels b { width: 50px; border-left: 3px solid #b0b0b0; box-shadow: inset 2px 0 #fff; display: flex; align-items: center; justify-content: center; }

.graphics { flex: 1; min-width: 0; display: flex; flex-direction: column; border-left: 3px solid #8c8c8c; border-bottom: 2px solid #aaa; }
.doctabs { display: flex; height: 49px; flex: none; background: #eee; }
.doc { display: flex; align-items: center; background: #595959; color: #fff; width: 552px; padding: 0 15px 5px; font-size: 27px; }
.doc span { flex: 1; margin-left: 10px; }
.canvas { flex: 1; background: #fff; border-right: 2px solid #b0b0b0; overflow: hidden; }
.axis { font: 24px "Noto Sans", sans-serif; }

.status { display: flex; height: 47px; background: linear-gradient(#e4e4e4, #d8d8d8 20%, #d8d8d8 70%, #c4c4c4); border-top: 2px solid #f2f2f2; }
.status > * { border-right: 2px solid #f6f6f6; box-shadow: inset -2px 0 #bdbdbd; }
.status p { width: 673px; padding: 3px 0 0 6px; line-height: 32px; }
.msg { flex: 1; }
.pad { width: 44px; }
.sicons { display: flex; align-items: center; gap: 9px; width: 164px; padding-left: 6px; }
.flag { background: #7d98a3; width: 35px; height: 35px; }
.status > .rest { width: 37px; border: 0; box-shadow: none; }
.sill { height: 17px; margin: 0 -7px; background: linear-gradient(#000 3px, #5a5a5a 3px, #3c3c3c 6px, #1c1c1c 7px); }
</style>
